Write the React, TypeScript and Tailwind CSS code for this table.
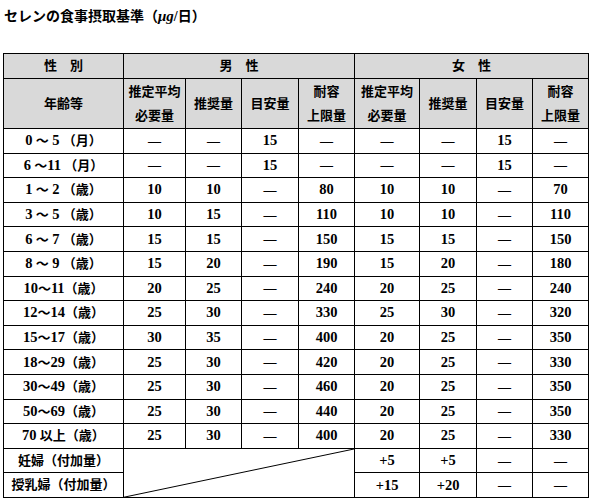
import React from "react";

const D = "—";

const rows: [string, string[]][] = [
  ["0 ～ 5 （月）", [D, D, "15", D, D, D, "15", D]],
  ["6 ～11 （月）", [D, D, "15", D, D, D, "15", D]],
  ["1 ～ 2 （歳）", ["10", "10", D, "80", "10", "10", D, "70"]],
  ["3 ～ 5 （歳）", ["10", "15", D, "110", "10", "10", D, "110"]],
  ["6 ～ 7 （歳）", ["15", "15", D, "150", "15", "15", D, "150"]],
  ["8 ～ 9 （歳）", ["15", "20", D, "190", "15", "20", D, "180"]],
  ["10～11（歳）", ["20", "25", D, "240", "20", "25", D, "240"]],
  ["12～14（歳）", ["25", "30", D, "330", "25", "30", D, "320"]],
  ["15～17（歳）", ["30", "35", D, "400", "20", "25", D, "350"]],
  ["18～29（歳）", ["25", "30", D, "420", "20", "25", D, "330"]],
  ["30～49（歳）", ["25", "30", D, "460", "20", "25", D, "350"]],
  ["50～69（歳）", ["25", "30", D, "440", "20", "25", D, "350"]],
  ["70 以上（歳）", ["25", "30", D, "400", "20", "25", D, "330"]],
];

const widths = [120, 62, 56, 57, 56, 65, 57, 56, 56];

const cell = "border border-black text-center align-middle p-0 leading-[18px]";
const head = "border border-black text-center align-middle p-0 bg-[#d9d9d9] leading-[24px]";

// digits a little larger, like the Century numerals of the original
function Label({ text }: { text: string }) {
  const parts = text.split(/(\d+|\+)/).filter(Boolean);
  return (
    <>
      {parts.map((p, i) =>
        /^[\d+]+$/.test(p) ? (
          <span key={i} className="text-[14.5px]">{p}</span>
        ) : (
          <span key={i}>{p}</span>
        )
      )}
    </>
  );
}

function Val({ v }: { v: string }) {
  return <span className={v === D ? "text-[13px]" : "text-[14.5px]"}>{v}</span>;
}

export default function App() {
  return (
    <div
      className="w-[591px] h-[498px] bg-white text-black font-bold text-[13px]"
      style={{ fontFamily: '"Liberation Serif", "Noto Sans CJK JP", serif' }}
    >
      <div className="pt-[4px] pl-[4px] text-[14px] leading-[24px]">
        セレンの食事摂取基準（<span className="italic text-[15px]">μg</span>/日）
      </div>
      <table className="ml-[3px] mt-[24px] border-collapse table-fixed w-[585px]">
        <colgroup>
          {widths.map((w, i) => (
            <col key={i} style={{ width: w }} />
          ))}
        </colgroup>
        <thead>
          <tr className="h-[24px]">
            <th className={head}>性　別</th>
            <th className={head} colSpan={4}>男　性</th>
            <th className={head} colSpan={4}>女　性</th>
          </tr>
          <tr className="h-[50px]">
            <th className={head}>年齢等</th>
            <th className={head}>推定平均<br />必要量</th>
            <th className={head}>推奨量</th>
            <th className={head}>目安量</th>
            <th className={head}>耐容<br />上限量</th>
            <th className={head}>推定平均<br />必要量</th>
            <th className={head}>推奨量</th>
            <th className={head}>目安量</th>
            <th className={head}>耐容<br />上限量</th>
          </tr>
        </thead>
        <tbody>
          {rows.map(([label, vals]) => (
            <tr key={label} className="h-[24.6px]">
              <td className={cell}><Label text={label} /></td>
              {vals.map((v, i) => (
                <td key={i} className={cell}><Val v={v} /></td>
              ))}
            </tr>
          ))}
          <tr className="h-[24.6px]">
            <td className={cell}>妊婦（付加量）</td>
            <td className={`${cell} relative`} colSpan={4} rowSpan={2}>
              <svg
                className="absolute inset-0 w-full h-full"
                viewBox="0 0 100 100"
                preserveAspectRatio="none"
              >
                <line x1="0" y1="100" x2="100" y2="0" stroke="black" strokeWidth="1" vectorEffect="non-scaling-stroke" />
              </svg>
            </td>
            <td className={cell}><Label text="+5" /></td>
            <td className={cell}><Label text="+5" /></td>
            <td className={cell}><Val v={D} /></td>
            <td className={cell}><Val v={D} /></td>
          </tr>
          <tr className="h-[24.6px]">
            <td className={cell}>授乳婦（付加量）</td>
            <td className={cell}><Label text="+15" /></td>
            <td className={cell}><Label text="+20" /></td>
            <td className={cell}><Val v={D} /></td>
            <td className={cell}><Val v={D} /></td>
          </tr>
        </tbody>
      </table>
    </div>
  );
}
